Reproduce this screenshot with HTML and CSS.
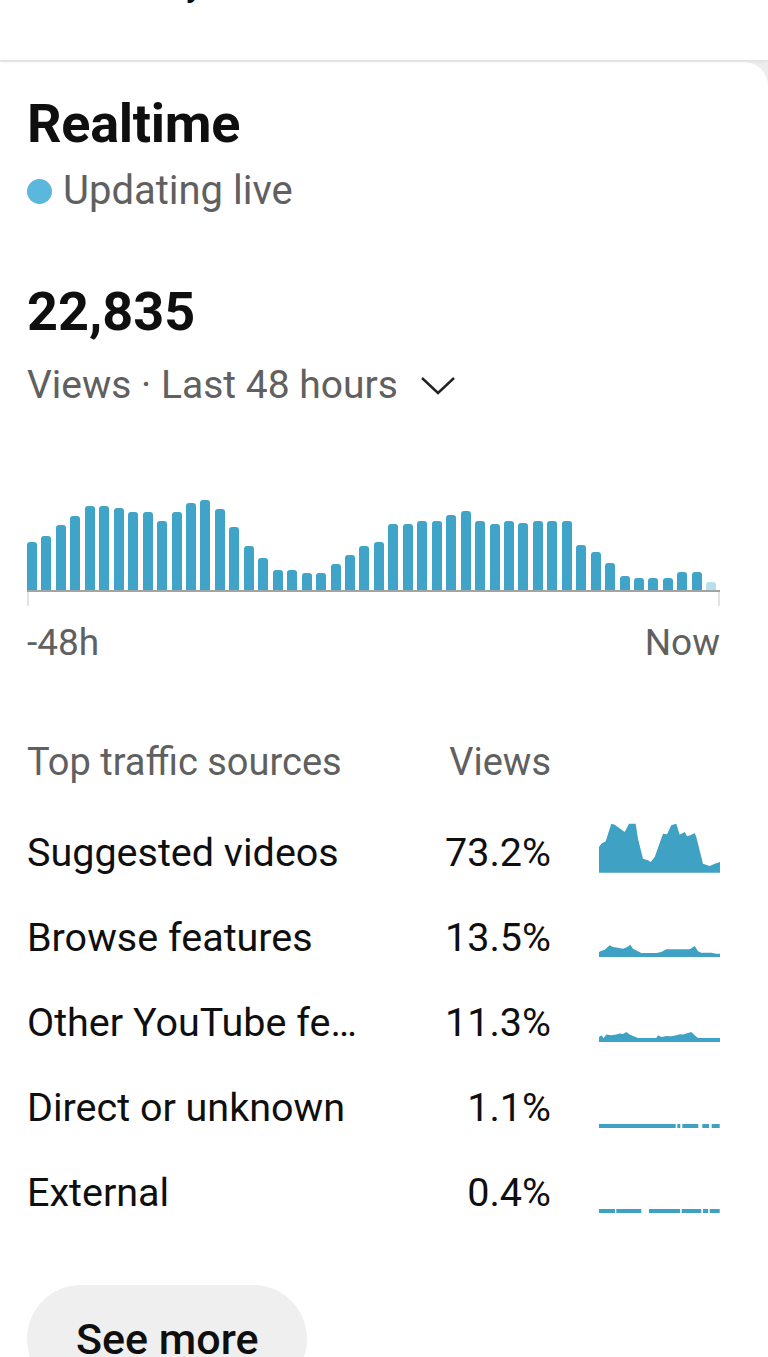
FILE: index.html
```html
<!DOCTYPE html>
<html lang="en">
<head>
    <meta charset="UTF-8">
    <meta name="viewport" content="width=device-width, initial-scale=1.0">
    <title>Realtime</title>
    <link rel="stylesheet" href="styles.css">
</head>
<body>
    <div class="topbar">
        <p class="topbar-title">Your analytics</p>
    </div>

    <section class="card">
        <h1 class="title">Realtime</h1>
        <p class="live"><span class="live-dot"></span>Updating live</p>

        <p class="total">22,835</p>
        <p class="period">Views · Last 48 hours
            <svg class="chevron" width="36" height="20" viewBox="0 0 36 20"><polyline points="2,3 18,18 34,3" fill="none" stroke="#222" stroke-width="2.4"/></svg>
        </p>

        <div class="chart">
            <div class="bars" id="bars"></div>
            <div class="ticks"></div>
            <div class="chart-labels"><span>-48h</span><span>Now</span></div>
        </div>

        <div class="sources">
            <div class="src-row src-head">
                <span class="src-name">Top traffic sources</span>
                <span class="src-pct">Views</span>
                <span></span>
            </div>
            <div class="src-row">
                <span class="src-name">Suggested videos</span>
                <span class="src-pct">73.2%</span>
                <svg class="spark" viewBox="0 0 121 66"><path d="M0,51.7 L0,26 L2.3,22.7 L6.7,20.3 L12.3,2.7 L15.7,3.7 L25.7,11 L30,2.7 L36.7,2.7 L39,17.7 L44,37.7 L49,39.3 L51.7,41 L55.7,36 L64,12.7 L68,13.3 L72.3,4.3 L77.3,2.7 L80.7,13.7 L85.7,11 L88,15.3 L91.3,14.3 L95.7,12 L97.3,16 L104,42.7 L110.7,45 L115.7,42.7 L121,41 L121,51.7 Z"/></svg>
            </div>
            <div class="src-row">
                <span class="src-name">Browse features</span>
                <span class="src-pct">13.5%</span>
                <svg class="spark" viewBox="0 0 121 66"><path d="M0,46 L1.3,45.3 L5.7,43.7 L10.7,39.3 L14,41 L19,41.7 L24,42.7 L28.3,41 L31.3,38.7 L34,42.7 L39,45.3 L42.3,47 L57.3,47 L62.3,46 L67.3,43.3 L90.7,43.3 L95.7,40 L99,45.3 L102.3,46.7 L112.3,46.7 L117.3,47.7 L121,47.7 L121,51 L0,51 Z"/></svg>
            </div>
            <div class="src-row">
                <span class="src-name">Other YouTube features</span>
                <span class="src-pct">11.3%</span>
                <svg class="spark" viewBox="0 0 121 66"><path d="M0,46 L2.3,44.3 L4.7,47 L7.3,43.6 L12.3,44.3 L17.3,43.6 L20.7,42.6 L24,43 L27.3,41 L30.7,43.6 L34,45 L39,47 L57.3,47 L59,44.3 L62.3,46 L67.3,45 L72.3,45.3 L77.3,44.3 L80.7,43.3 L84,43.6 L87.3,42.6 L92.3,41 L95.7,44.3 L99,47 L121,47 L121,51 L0,51 Z"/></svg>
            </div>
            <div class="src-row">
                <span class="src-name">Direct or unknown</span>
                <span class="src-pct">1.1%</span>
                <svg class="spark" viewBox="0 0 121 66">
                    <rect x="0" y="48" width="76.7" height="4"/>
                    <rect x="78.3" y="48" width="3" height="4"/>
                    <rect x="83.3" y="48" width="16" height="4"/>
                    <rect x="103.3" y="48" width="6.7" height="4"/>
                    <rect x="112.7" y="48" width="8" height="4"/>
                </svg>
            </div>
            <div class="src-row">
                <span class="src-name">External</span>
                <span class="src-pct">0.4%</span>
                <svg class="spark" viewBox="0 0 121 66">
                    <rect x="0" y="48" width="16" height="4"/>
                    <rect x="17.3" y="48" width="25" height="4"/>
                    <rect x="50" y="48" width="31" height="4"/>
                    <rect x="82.7" y="48" width="19.6" height="4"/>
                    <rect x="104" y="48" width="5" height="4"/>
                    <rect x="110.7" y="48" width="10" height="4"/>
                </svg>
            </div>
        </div>

        <button class="more" type="button">See more</button>
    </section>

    <script>
        // views per hour, oldest first; the last hour is still filling in
        const hourly = [48, 54, 65, 74, 84, 84, 82, 78, 78, 69, 78, 87, 90, 81, 63, 44,
                        32, 20, 20, 17, 17, 26, 35, 44, 48, 66, 66, 69, 69, 75, 79, 69,
                        66, 69, 67, 69, 69, 69, 45, 38, 27, 14, 12, 12, 12, 18, 18, 8];
        const bars = document.getElementById("bars");

        hourly.forEach(function (value, i) {
            const bar = document.createElement("div");
            bar.className = "bar";
            if (i === hourly.length - 1) {
                bar.classList.add("bar-current");
            }
            bar.style.height = value + "px";
            bars.appendChild(bar);
        });
    </script>
</body>
</html>
```

FILE: styles.css
```css
body { margin: 0; font-family: Roboto, "Liberation Sans", sans-serif; background-color: #ededed; color: #0f0f0f; overflow: hidden; }
p, h1 { margin: 0; }

.topbar { height: 60px; background-color: #fff; box-shadow: 0 1px 4px rgba(0, 0, 0, 0.08); position: relative; z-index: 1; overflow: hidden; }
.topbar-title { margin: -37px 0 0 28px; font-size: 38px; line-height: 38px; }

.card { margin-top: 2px; background-color: #fff; border-radius: 0 24px 0 0; padding: 30px 48px 0 27px; min-height: 1400px; }

.title { font-size: 54px; line-height: 64px; font-weight: 700; letter-spacing: -0.3px; }
.live { margin-top: 11px; font-size: 40px; line-height: 48px; color: #606060; display: flex; align-items: center; }
.live-dot { width: 25px; height: 25px; border-radius: 50%; background-color: #5cb7dc; margin-right: 11px; }

.total { margin-top: 65px; font-size: 54px; line-height: 64px; font-weight: 700; }
.period { margin-top: 18px; font-size: 39px; line-height: 46px; color: #606060; display: flex; align-items: center; }
.chevron { margin-left: 22px; }

.chart { margin-top: 86px; }
.bars { height: 96px; display: flex; align-items: flex-end; justify-content: space-between; padding-right: 3px; border-bottom: 2px solid #a3a3a3; }
.bar { width: 10px; background-color: #3fa4c7; border-radius: 3px 3px 0 0; }
.bar-current { background-color: #b9dfec; }
.ticks { height: 14px; border-left: 2px solid #e2e2e2; border-right: 2px solid #e2e2e2; }
.chart-labels { margin-top: 15px; display: flex; justify-content: space-between; font-size: 37px; line-height: 44px; color: #606060; }

.sources { margin-top: 54px; }
.src-row { height: 85px; display: grid; grid-template-columns: minmax(0, 1fr) 196px 121px; align-items: center; font-size: 39.5px; line-height: 46px; }
.src-head { margin-bottom: 6px; font-size: 38px; color: #606060; }
.src-name { padding-right: 40px; white-space: nowrap; overflow: hidden; text-overflow: ellipsis; }
.src-pct { padding-right: 48px; text-align: right; }
.spark { width: 121px; height: 66px; margin-top: 3px; fill: #3fa1c4; }

.more { margin-top: 50px; height: 108px; padding: 0 49px; border: none; border-radius: 54px; background-color: #efefef; font-family: inherit; font-size: 43px; font-weight: 500; color: #0f0f0f; }
```
